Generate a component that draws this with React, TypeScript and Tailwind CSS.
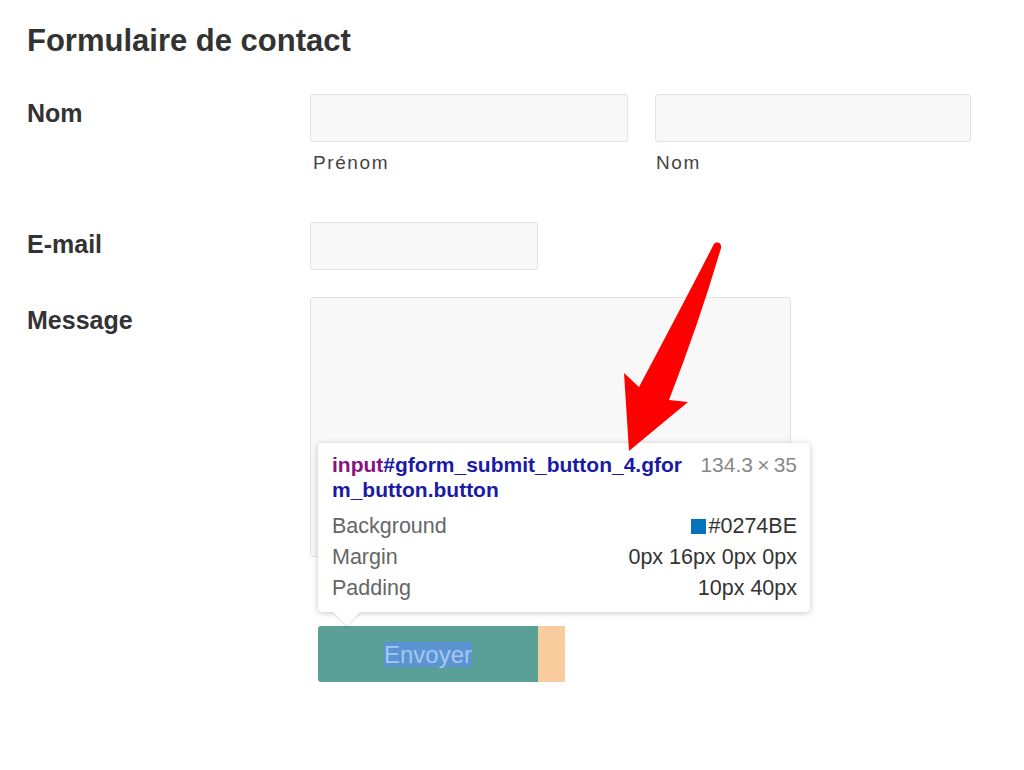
const Field = ({ className }: { className: string }) => (
  <div className={`bg-[#f8f8f8] border border-[#e2e2e2] rounded-[3px] ${className}`} />
)

const Row = ({ label, labelPad, children }: { label: string; labelPad: string; children: React.ReactNode }) => (
  <div className="grid grid-cols-[283px_1fr]">
    <div className={`text-[25px] leading-[29px] font-bold text-[#333] ${labelPad}`}>{label}</div>
    <div>{children}</div>
  </div>
)

export default function App() {
  return (
    <div className="relative min-h-[770px] w-[1024px] bg-white font-['Liberation_Sans',Arial,sans-serif] overflow-hidden">
      <div className="pl-[27px] pt-[23px]">
        <h1 className="text-[31px] leading-[36px] font-bold text-[#333]">Formulaire de contact</h1>

        {/* NOM */}
        <div className="mt-[35px]">
          <Row label="Nom" labelPad="pt-[5px]">
            <div className="flex gap-[27px]">
              <div>
                <Field className="w-[318px] h-[48px]" />
                <div className="mt-[10px] pl-[3px] text-[19px] leading-[22px] tracking-[1.6px] text-[#444]">Prénom</div>
              </div>
              <div>
                <Field className="w-[316px] h-[48px]" />
                <div className="mt-[10px] pl-[1px] text-[19px] leading-[22px] tracking-[1.6px] text-[#444]">Nom</div>
              </div>
            </div>
          </Row>
        </div>

        {/* E-MAIL */}
        <div className="mt-[48px]">
          <Row label="E-mail" labelPad="pt-[8px]">
            <Field className="w-[228px] h-[48px]" />
          </Row>
        </div>

        {/* MESSAGE */}
        <div className="mt-[27px]">
          <Row label="Message" labelPad="pt-[9px]">
            <Field className="w-[481px] h-[260px]" />
          </Row>
        </div>

        {/* BUTTON */}
        <div className="mt-[69px] pl-[291px]">
          <div className="relative flex w-fit">
            <div className="w-[220px] h-[56px] bg-[#5a9f98] rounded-l-[3px] flex items-center justify-center">
              <span className="bg-[#5b93d3] text-[#a5c8ee] text-[24px] leading-[25px]">Envoyer</span>
            </div>
            <div className="w-[27px] h-[56px] bg-[#f9cc9d]" />

            {/* devtools tooltip */}
            <div className="absolute left-0 bottom-[calc(100%+14px)] w-[492px] z-10">
              <div className="bg-white rounded-[4px] shadow-[0_1px_6px_rgba(0,0,0,0.22)] pl-[14px] pr-[13px] pt-[9px] pb-[8px]">
                <div className="flex justify-between">
                  <div className="text-[21px] leading-[25px] font-bold text-[#1a1aa6]">
                    <span className="text-[#881280]">input</span>#gform_submit_button_4.gfor
                    <br />
                    m_button.button
                  </div>
                  <div className="text-[21px] leading-[25px] text-[#888]">134.3{"\u2009×\u2009"}35</div>
                </div>
                <div className="mt-[9px] text-[21.5px] leading-[31px]">
                  <div className="flex justify-between">
                    <span className="text-[#666]">Background</span>
                    <span className="flex items-center gap-[3px] text-[#333]">
                      <span className="w-[15px] h-[15px] bg-[#0274be]" />
                      #0274BE
                    </span>
                  </div>
                  <div className="flex justify-between">
                    <span className="text-[#666]">Margin</span>
                    <span className="text-[#333]">0px 16px 0px 0px</span>
                  </div>
                  <div className="flex justify-between">
                    <span className="text-[#666]">Padding</span>
                    <span className="text-[#333]">10px 40px</span>
                  </div>
                </div>
              </div>
              <svg className="absolute left-[14px] top-full" width="30" height="16" viewBox="0 0 30 16">
                <path d="M1 0 L28 0 L14.5 14 Z" fill="#fff" style={{ filter: "drop-shadow(0 1px 1px rgba(0,0,0,0.15))" }} />
              </svg>
            </div>
          </div>
        </div>
      </div>

      {/* red annotation arrow */}
      <svg className="absolute inset-0 z-20 pointer-events-none" width="1024" height="770" viewBox="0 0 1024 770">
        <path
          d="M714 244 C717 241 722 243 721 248 Q700 320 669 400 L688 402 L629 451 L624 373 L639 387 Q680 310 714 244 Z"
          fill="#ff0000"
        />
      </svg>
    </div>
  )
}
